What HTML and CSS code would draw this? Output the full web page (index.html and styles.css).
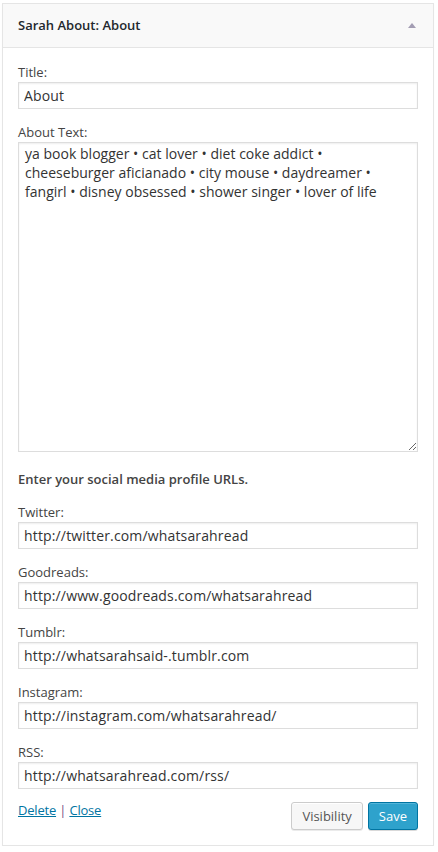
FILE: index.html
```html
<!DOCTYPE html>
<html>
<head>
<meta charset="utf-8">
<link rel="stylesheet" href="styles.css">
</head>
<body>
<div class="widget">
  <div class="widget-top">
    <h3 class="widget-title">Sarah About<span class="in-title">: About</span></h3>
    <span class="toggle"></span>
  </div>
  <div class="widget-inside">
    <div class="field">
      <label class="lbl">Title:</label>
      <input class="widefat" type="text" value="About">
    </div>
    <div class="field field-area">
      <label class="lbl">About Text:</label>
      <textarea class="widefat area">ya book blogger • cat lover • diet coke addict • cheeseburger aficianado • city mouse • daydreamer • fangirl • disney obsessed • shower singer • lover of life</textarea>
    </div>
    <p class="intro">Enter your social media profile URLs.</p>
    <div class="field">
      <label class="lbl">Twitter:</label>
      <input class="widefat" type="text" value="http://twitter.com/whatsarahread">
    </div>
    <div class="field">
      <label class="lbl">Goodreads:</label>
      <input class="widefat" type="text" value="http://www.goodreads.com/whatsarahread">
    </div>
    <div class="field">
      <label class="lbl">Tumblr:</label>
      <input class="widefat" type="text" value="http://whatsarahsaid-.tumblr.com">
    </div>
    <div class="field">
      <label class="lbl">Instagram:</label>
      <input class="widefat" type="text" value="http://instagram.com/whatsarahread/">
    </div>
    <div class="field">
      <label class="lbl">RSS:</label>
      <input class="widefat" type="text" value="http://whatsarahread.com/rss/">
    </div>
    <div class="actions">
      <div class="links"><a href="#" class="link">Delete</a> <span class="sep">|</span> <a href="#" class="link">Close</a></div>
      <div class="buttons">
        <button class="btn btn-secondary">Visibility</button>
        <button class="btn btn-primary">Save</button>
      </div>
    </div>
  </div>
</div>
</body>
</html>
```
FILE: styles.css
```css
html, body {
  margin: 0;
  padding: 0;
  background: #fff;
}
body {
  font-family: "Open Sans", "Liberation Sans", sans-serif;
  font-size: 13px;
  color: #444;
  padding: 3px 0 0 2px;
}
.widget {
  width: 432px;
  box-sizing: border-box;
  border: 1px solid #e5e5e5;
  background: #fff;
  box-shadow: 0 1px 1px rgba(0,0,0,0.04);
}
.widget-top {
  background: #f9f9f9;
  border-bottom: 1px solid #e5e5e5;
  display: flex;
  align-items: center;
  justify-content: space-between;
  height: 43px;
}
.widget-title {
  margin: 0;
  padding: 0 15px;
  font-size: 13px;
  font-weight: 600;
  color: #23282d;
  line-height: 13px;
  margin-top: -1px;
}
.toggle {
  width: 0;
  height: 0;
  border-left: 4px solid transparent;
  border-right: 4px solid transparent;
  border-bottom: 5px solid #a39db3;
  margin-right: 17px;
  margin-top: -1px;
}
.widget-inside {
  padding: 1px 15px 15px;
}
.field {
  margin: 13px 0;
}
.lbl {
  display: block;
  line-height: 20px;
  height: 20px;
  color: #444;
}
.widefat {
  display: block;
  width: 100%;
  box-sizing: border-box;
  height: 27px;
  margin: 0;
  padding: 0 5px;
  border: 1px solid #ddd;
  box-shadow: inset 0 1px 2px rgba(0,0,0,0.07);
  background: #fff;
  color: #333;
  font-family: "Open Sans", "Liberation Sans", sans-serif;
  font-size: 14px;
  letter-spacing: 0.15px;
  outline: none;
  border-radius: 0;
}
.area {
  height: 310px;
  padding: 1px 6px;
  line-height: 19px;
  letter-spacing: 0.02px;
  resize: vertical;
}
.field-area {
  margin-bottom: 17px;
}
.intro {
  margin: 17px 0 13px;
  font-weight: 600;
  line-height: 20px;
  color: #444;
}
.actions {
  display: flex;
  justify-content: space-between;
  align-items: flex-start;
  margin-top: 12px;
}
.links {
  line-height: 16px;
  color: #6a4a7a;
  letter-spacing: -0.2px;
}
.link {
  color: #0074a2;
  text-decoration: underline;
}
.sep {
  color: #7b4a84;
}
.buttons {
  display: flex;
  gap: 5px;
}
.btn {
  height: 28px;
  box-sizing: border-box;
  padding: 0 10px 1px;
  font-family: "Open Sans", "Liberation Sans", sans-serif;
  font-size: 13px;
  line-height: 26px;
  border-radius: 3px;
  border: 1px solid;
  cursor: pointer;
}
.btn-secondary {
  background: #f7f7f7;
  border-color: #ccc;
  color: #555;
  box-shadow: inset 0 1px 0 #fff, 0 1px 0 rgba(0,0,0,0.08);
}
.btn-primary {
  background: #2ea2cc;
  border-color: #0074a2;
  color: #fff;
  box-shadow: inset 0 1px 0 rgba(120,200,230,0.5), 0 1px 0 rgba(0,0,0,0.15);
}
```
